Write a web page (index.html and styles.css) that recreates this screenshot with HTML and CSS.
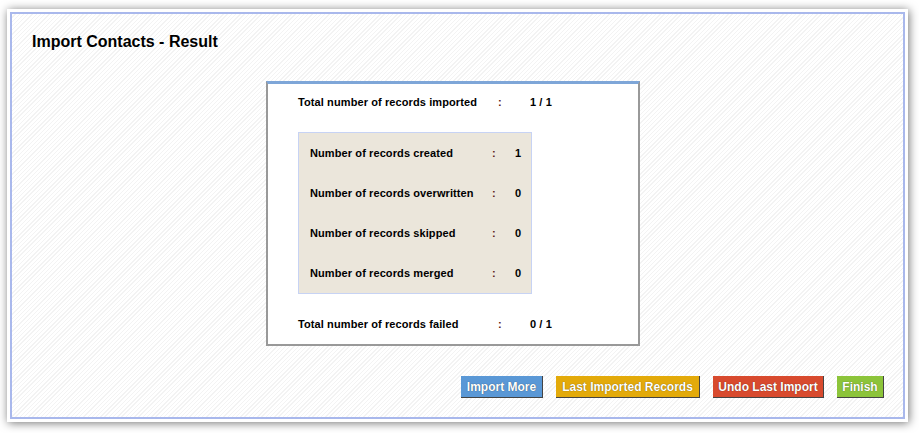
FILE: index.html
```html
<!DOCTYPE html>
<html>
<head>
<meta charset="utf-8">
<link rel="stylesheet" href="styles.css">
</head>
<body>
<div class="card">
  <div class="panel">
    <h1 class="title">Import Contacts - Result</h1>
    <div class="result">
      <div class="row total">
        <span class="label">Total number of records imported</span>
        <span class="colon">:</span>
        <span class="value">1 / 1</span>
      </div>
      <div class="details">
        <div class="row sub">
          <span class="label">Number of records created</span>
          <span class="colon">:</span>
          <span class="value">1</span>
        </div>
        <div class="row sub">
          <span class="label">Number of records overwritten</span>
          <span class="colon">:</span>
          <span class="value">0</span>
        </div>
        <div class="row sub">
          <span class="label">Number of records skipped</span>
          <span class="colon">:</span>
          <span class="value">0</span>
        </div>
        <div class="row sub">
          <span class="label">Number of records merged</span>
          <span class="colon">:</span>
          <span class="value">0</span>
        </div>
      </div>
      <div class="row total failed">
        <span class="label">Total number of records failed</span>
        <span class="colon">:</span>
        <span class="value">0 / 1</span>
      </div>
    </div>
    <div class="actions">
      <button class="btn blue">Import More</button>
      <button class="btn orange">Last Imported Records</button>
      <button class="btn red">Undo Last Import</button>
      <button class="btn green">Finish</button>
    </div>
  </div>
</div>
</body>
</html>
```
FILE: styles.css
```css
html, body {
  margin: 0;
  padding: 0;
  background: #ffffff;
}
body {
  padding: 9px 11px 11px 7px;
  font-family: "Liberation Sans", Arial, sans-serif;
}
.card {
  width: 895px;
  height: 407px;
  padding: 3px;
  background: #fff;
  box-shadow: 1px 1px 9px rgba(0, 0, 0, 0.55);
}
.panel {
  box-sizing: border-box;
  height: 100%;
  border: 2px solid #a9b8ec;
  background: repeating-linear-gradient(135deg, #ffffff 0 2px, #f3f3f3 2px 3px);
}
.title {
  margin: 0;
  padding: 19px 0 0 20px;
  font-size: 16px;
  line-height: 18px;
  font-weight: bold;
  color: #000;
  height: 47px;
  box-sizing: border-box;
}
.result {
  margin: 20px 0 0 254px;
  width: 374px;
  height: 265px;
  box-sizing: border-box;
  background: #fff;
  border: 2px solid #999999;
  border-top: 3px solid #7ea6d8;
  padding: 11px 0 0 30px;
}
.row {
  display: flex;
  align-items: center;
  font-size: 11px;
  font-weight: bold;
  letter-spacing: 0.1px;
  color: #000;
  height: 14px;
}
.row.total .label { width: 200px; }
.row.total .colon { width: 32px; color: #5a1a1a; }
.row.sub .label { width: 182px; }
.row.sub .colon { width: 23px; color: #5a1a1a; }
.details {
  margin-top: 23px;
  width: 234px;
  height: 162px;
  box-sizing: border-box;
  background: #ebe6db;
  border: 1px solid #c7d3f4;
  padding: 13px 0 0 11px;
  display: flex;
  flex-direction: column;
  gap: 26px;
}
.failed {
  margin-top: 23px;
}
.actions {
  display: flex;
  justify-content: flex-end;
  gap: 13px;
  padding: 30px 19px 0 0;
}
.btn {
  box-sizing: border-box;
  height: 22px;
  padding: 0;
  white-space: nowrap;
  border: none;
  border-right: 1px solid #444;
  border-bottom: 1px solid #444;
  font-family: "Liberation Sans", Arial, sans-serif;
  font-size: 12px;
  font-weight: bold;
  color: #fff;
  text-shadow: 0 0 1px rgba(0,0,0,0.6);
  cursor: pointer;
}
.btn.blue { background: #5a98d6; width: 82px; }
.btn.orange { background: #e3aa0a; width: 144px; }
.btn.red { background: #d84a2e; width: 111px; }
.btn.green { background: #8cc43a; width: 47px; }
```
